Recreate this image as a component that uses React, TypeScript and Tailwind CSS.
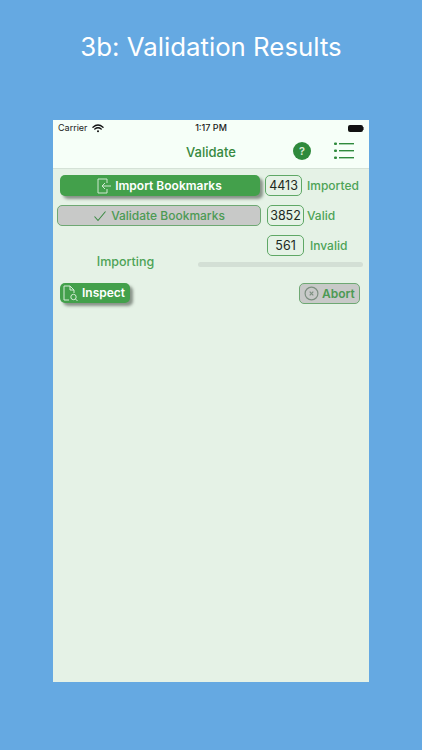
import React from "react";

const font = { fontFamily: '"Inter","Liberation Sans",sans-serif' };

function Count({ value, className }: { value: string; className: string }) {
  return (
    <div className={"h-[21px] rounded-[5px] border border-[#5fa866] flex items-center justify-center pt-[1px] text-[12.5px] text-[#1c2a1e] " + className}>
      {value}
    </div>
  );
}

export default function App() {
  return (
    <div className="w-[422px] h-[750px] bg-[#65a9e2] flex flex-col items-center overflow-hidden" style={font}>
      <div className="h-[120px] pt-[29px] text-[25.8px] leading-[36px] text-white">3b: Validation Results</div>
      <div className="w-[316px] h-[562px] bg-[#e5f2e6] flex flex-col">
        <div className="h-[49px] bg-[#f6fff8] border-b border-[#d5e2d7] flex flex-col">
          <div className="h-[16px] px-[5px] flex items-center justify-between text-[9px] text-[#222]">
            <div className="flex items-center gap-[4px] w-[100px]">
              <span>Carrier</span>
              <svg width="12" height="9" viewBox="0 0 12 9" fill="none" stroke="#111" strokeLinecap="round">
                <path d="M1 3.2C4 .6 8 .6 11 3.2" strokeWidth="1.4" />
                <path d="M2.8 5C4.8 3.4 7.2 3.4 9.2 5" strokeWidth="1.4" />
                <circle cx="6" cy="7.2" r="1" fill="#111" stroke="none" />
              </svg>
            </div>
            <span className="font-medium">1:17 PM</span>
            <div className="w-[100px] flex justify-end items-center">
              <div className="w-[15px] h-[7px] rounded-[2px] bg-[#111]" />
              <div className="w-[1px] h-[3px] bg-[#777]" />
            </div>
          </div>
          <div className="flex-1 relative flex items-center justify-center text-[13px] font-medium text-[#37893f]">
            <span className="mt-[1px]">Validate</span>
            <div className="absolute left-[240px] top-[6px] w-[18px] h-[18px] rounded-full bg-[#2f8a3c] text-[#d8ead9] text-[11px] font-semibold flex items-center justify-center">?</div>
            <svg className="absolute left-[281px] top-[6px]" width="20" height="18" viewBox="0 0 20 18" fill="#2f8a3c">
              <rect x="0" y="0.5" width="3" height="2.4" rx="1" />
              <rect x="0" y="7.5" width="3" height="2.4" rx="1" />
              <rect x="0" y="14.5" width="3" height="2.4" rx="1" />
              <rect x="5" y="1" width="15" height="1.4" />
              <rect x="5" y="8" width="15" height="1.4" />
              <rect x="5" y="15" width="15" height="1.4" />
            </svg>
          </div>
        </div>

        <div className="flex-1 flex flex-col pt-[6px]">
          <div className="flex items-center h-[21px] pl-[7px]">
            <div className="w-[200px] h-[21px] rounded-[5px] bg-[#43a04b] shadow-[3px_3px_3px_rgba(60,70,60,0.55)] flex items-center justify-center gap-[3px] pr-[2px] text-white text-[12px] font-semibold">
              <svg width="16" height="16" viewBox="0 0 16 16" fill="none" stroke="#cfe8d1" strokeWidth="1">
                <path d="M11 5V1H2v14h9v-4" />
                <path d="M15 8H6M9 5L6 8l3 3" />
              </svg>
              <span>Import Bookmarks</span>
            </div>
            <Count value="4413" className="w-[37px] ml-[5px]" />
            <span className="ml-[5px] text-[12px] font-medium text-[#4da356]">Imported</span>
          </div>

          <div className="flex items-center h-[21px] pl-[4px] mt-[9px]">
            <div className="w-[204px] h-[21px] rounded-[5px] bg-[#c8c9c8] border border-[#6ea873] flex items-center justify-center gap-[4px] text-[#4c9a54] text-[12px] font-medium">
              <svg width="14" height="12" viewBox="0 0 14 12" fill="none" stroke="#3d8a45" strokeWidth="1.1">
                <path d="M1.5 6.5L5 10.5L12.5 1.5" />
              </svg>
              <span>Validate Bookmarks</span>
            </div>
            <Count value="3852" className="w-[37px] ml-[6px]" />
            <span className="ml-[3px] text-[12px] font-medium text-[#4da356]">Valid</span>
          </div>

          <div className="flex items-center h-[21px] pl-[214px] mt-[9px]">
            <Count value="561" className="w-[37px]" />
            <span className="ml-[6px] text-[12px] font-medium text-[#4da356]">Invalid</span>
          </div>

          <div className="flex items-center h-[12px] mt-[1px]">
            <div className="w-[145px] text-center text-[12.5px] font-medium text-[#4da356] -mt-[2px]">Importing</div>
            <div className="w-[165px] h-[5px] rounded-full bg-[#d3dfd5] mt-[2px]" />
          </div>

          <div className="flex items-start justify-between pl-[7px] pr-[9px] mt-[14px]">
            <div className="w-[70px] h-[20px] rounded-[5px] bg-[#43a04b] shadow-[3px_3px_3px_rgba(60,70,60,0.55)] flex items-center gap-[3px] pl-[2px] text-white text-[12px] font-semibold">
              <svg width="17" height="17" viewBox="0 0 17 17" fill="none" stroke="#d5ecd7" strokeWidth="1">
                <path d="M7 15H2V1h6l4 4v3M8 1v4h4" />
                <circle cx="11.5" cy="12" r="2.7" />
                <path d="M13.5 14l2 2" />
              </svg>
              <span>Inspect</span>
            </div>
            <div className="w-[61px] h-[21px] rounded-[5px] bg-[#c8c9c8] border border-[#6ea873] flex items-center gap-[3px] pl-[4px] text-[#4c9a54] text-[12px] font-semibold">
              <svg width="15" height="15" viewBox="0 0 15 15" fill="none" stroke="#7d8f80" strokeWidth="1.2">
                <circle cx="7.5" cy="7.5" r="6.4" />
                <path d="M5.7 5.7l3.6 3.6M9.3 5.7l-3.6 3.6" />
              </svg>
              <span>Abort</span>
            </div>
          </div>
        </div>
      </div>
    </div>
  );
}
